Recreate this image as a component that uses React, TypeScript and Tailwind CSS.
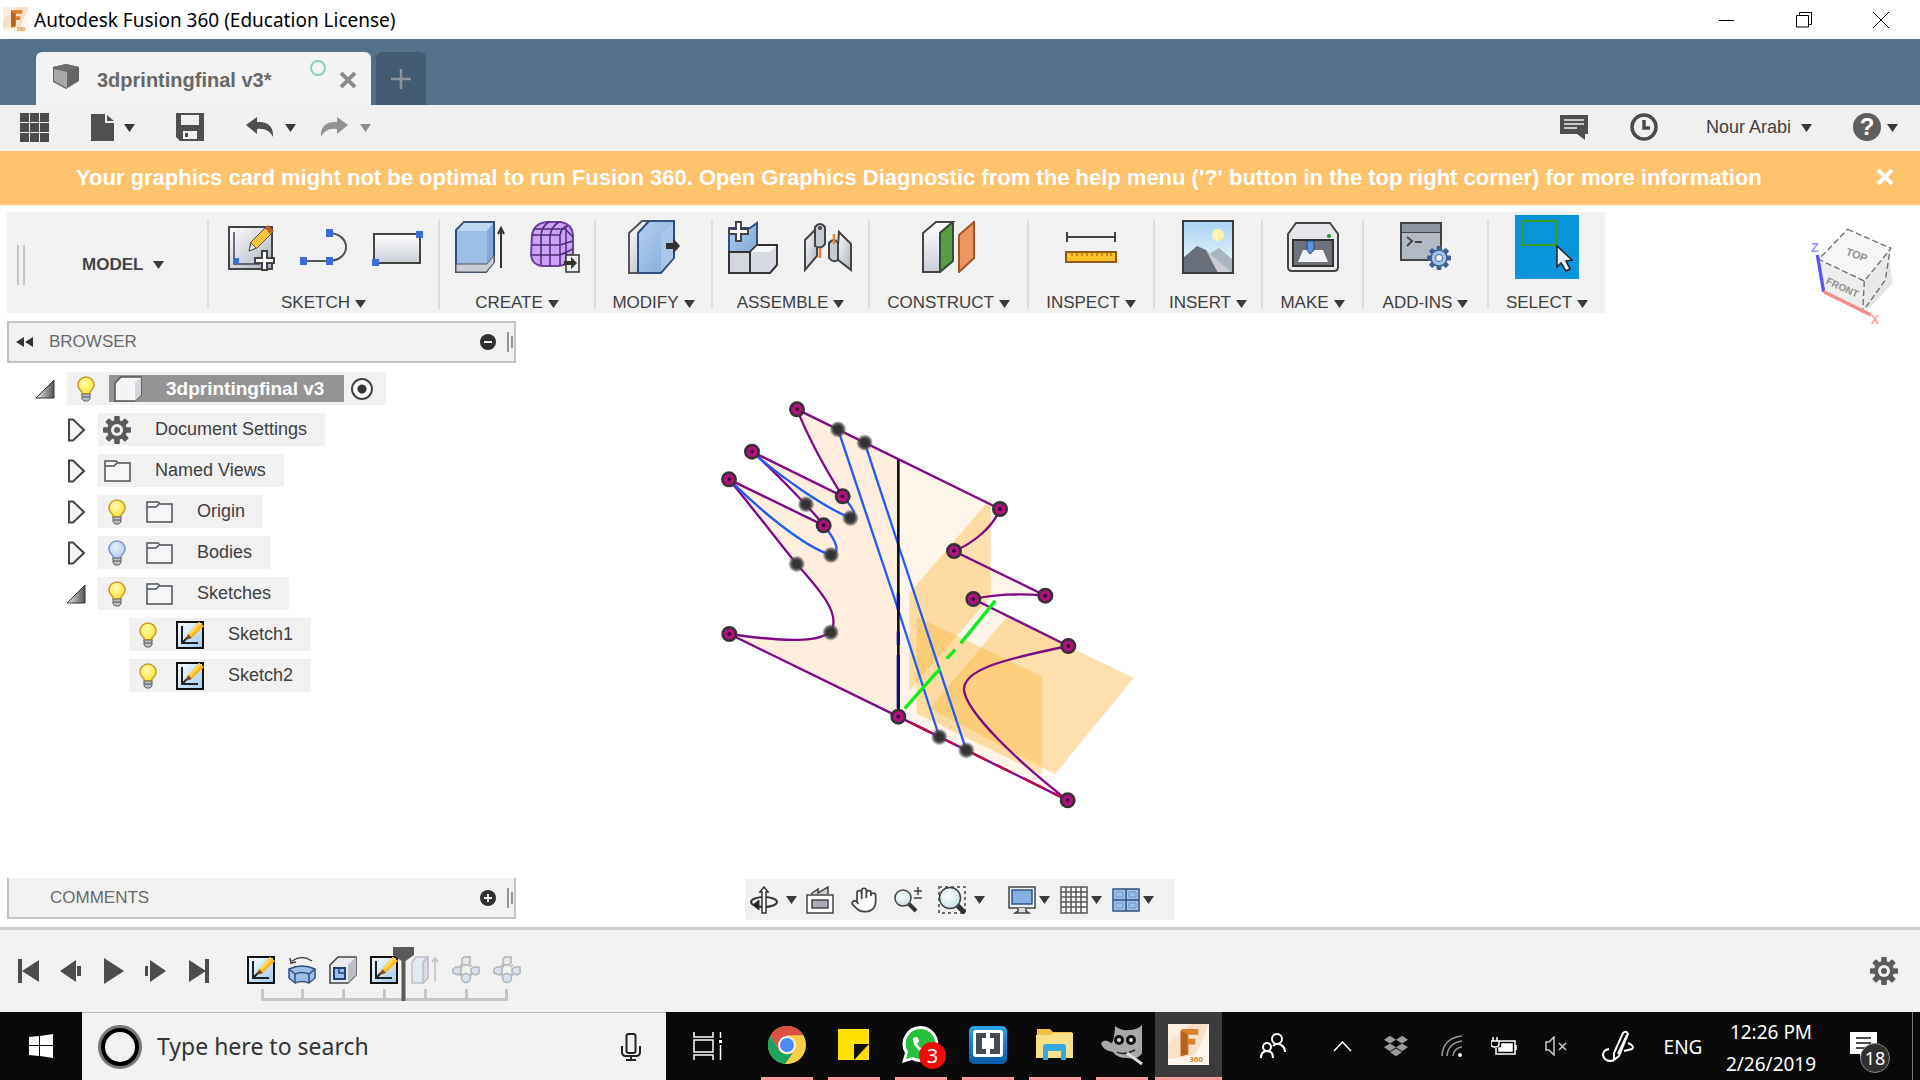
import { useState } from "react";
import type { ReactNode } from "react";
import { FaDropbox, FaPhoneAlt } from "react-icons/fa";
import { Hand } from "lucide-react";

type Row = {
  label: string;
  level: 1 | 2;
  open?: boolean;
  bulb?: "on" | "off";
  icon: "gear" | "folder" | "sketch";
};

const rows: Row[] = [
  { label: "Document Settings", level: 1, icon: "gear" },
  { label: "Named Views", level: 1, icon: "folder" },
  { label: "Origin", level: 1, bulb: "on", icon: "folder" },
  { label: "Bodies", level: 1, bulb: "off", icon: "folder" },
  { label: "Sketches", level: 1, open: true, bulb: "on", icon: "folder" },
  { label: "Sketch1", level: 2, bulb: "on", icon: "sketch" },
  { label: "Sketch2", level: 2, bulb: "on", icon: "sketch" },
];

const purplePoints = [
  [291, 88], [156, 215], [87, 298], [428, 349], [371, 436], [88, 762], [595, 1010],
  [900, 387], [762, 513], [1036, 647], [820, 657], [1105, 798], [1103, 1261],
];

const darkPoints = [
  [414, 148], [494, 188], [318, 373], [451, 414], [290, 552], [393, 525], [392, 757], [718, 1071], [799, 1111],
];

export default function App() {
  const [showWarning, setShowWarning] = useState(true);

  return (
    <div className="flex min-h-screen flex-col bg-white font-['Liberation_Sans',Arial,sans-serif] text-[#3f3f3f]">
      <Gradients />
      <TitleBar />
      <TabBar />
      <QuickAccess />
      {showWarning && (
        <div className="flex h-[54px] items-center bg-[#ffc26d] pb-[2px] pl-[76px] pr-[26px] text-white">
          <p className="flex-1 whitespace-nowrap text-[22px] font-bold">
            Your graphics card might not be optimal to run Fusion 360. Open Graphics Diagnostic from the help menu ('?'
            button in the top right corner) for more information
          </p>
          <button type="button" aria-label="Dismiss" onClick={() => setShowWarning(false)}>
            <svg className="size-[18px]" viewBox="0 0 18 18" stroke="#fff" strokeWidth="4">
              <path d="M2 2L16 16M16 2L2 16" />
            </svg>
          </button>
        </div>
      )}
      <main className="flex flex-1 flex-col pt-[7px]">
        <div className="flex justify-between pl-[7px] pr-[17px]">
          <Ribbon />
          <ViewCube />
        </div>
        <div className="mt-2 flex flex-1 justify-between px-[7px]">
          <aside className="flex w-[509px] flex-col justify-between pb-2">
            <Browser />
            <div className="flex h-[41px] items-center border-x-2 border-b-2 border-[#c4c4c4] bg-[#f1f1f1] pl-[41px]">
              <h2 className="flex-1 text-[17px] text-[#6b6b6b]">COMMENTS</h2>
              <RoundButton label="Expand comments" path="M4 8H12M8 4V12" />
              <PanelGrip />
            </div>
          </aside>
          <section className="flex flex-1 flex-col items-center justify-between pb-[7px] pt-[59px]">
            <SketchCanvas />
            <NavBar />
          </section>
          <div className="w-[509px]" />
        </div>
      </main>
      <Timeline />
      <Taskbar />
    </div>
  );
}

function Gradients() {
  return (
    <svg className="absolute size-0" aria-hidden="true">
      <defs>
        <linearGradient id="steel" x1="0" y1="0" x2="1" y2="1">
          <stop offset="0" stopColor="#ffffff" />
          <stop offset="1" stopColor="#aab1bd" />
        </linearGradient>
        <linearGradient id="blue" x1="0" y1="0" x2="1" y2="1">
          <stop offset="0" stopColor="#b4d0ee" />
          <stop offset="1" stopColor="#7fa9d8" />
        </linearGradient>
        <linearGradient id="page" x1="0" y1="0" x2="0" y2="1">
          <stop offset="0" stopColor="#ffffff" />
          <stop offset="1" stopColor="#c9ced8" />
        </linearGradient>
        <linearGradient id="sky" x1="0" y1="0" x2="0" y2="1">
          <stop offset="0" stopColor="#a9d4f2" />
          <stop offset="1" stopColor="#f3f8fb" />
        </linearGradient>
        <linearGradient id="sheet" x1="0" y1="0" x2="1" y2="1">
          <stop offset="0" stopColor="#ffffff" />
          <stop offset="1" stopColor="#9fc9ee" />
        </linearGradient>
        <linearGradient id="wedge" x1="0" y1="0" x2="1" y2="0">
          <stop offset="0" stopColor="#eeeeee" />
          <stop offset="1" stopColor="#555555" />
        </linearGradient>
        <linearGradient id="brackets" x1="0" y1="0" x2="0" y2="1">
          <stop offset="0" stopColor="#2ba5e6" />
          <stop offset="1" stopColor="#0b5aa8" />
        </linearGradient>
        <radialGradient id="bulbOn" cx="0.4" cy="0.35" r="0.7">
          <stop offset="0" stopColor="#fffcb0" />
          <stop offset="1" stopColor="#ffe22e" />
        </radialGradient>
        <radialGradient id="bulbOff" cx="0.4" cy="0.35" r="0.7">
          <stop offset="0" stopColor="#e6f0fe" />
          <stop offset="1" stopColor="#b4cdf5" />
        </radialGradient>
        <radialGradient id="lens" cx="0.4" cy="0.35" r="0.8">
          <stop offset="0" stopColor="#ffffff" />
          <stop offset="1" stopColor="#b9dbe0" />
        </radialGradient>
        <radialGradient id="point">
          <stop offset="0.45" stopColor="#333333" />
          <stop offset="0.7" stopColor="#444444" stopOpacity="0.8" />
          <stop offset="1" stopColor="#777777" stopOpacity="0" />
        </radialGradient>
      </defs>
    </svg>
  );
}

function Caret({ muted }: { muted?: boolean }) {
  return (
    <svg className="h-[9px] w-[11px] shrink-0" viewBox="0 0 11 9" fill={muted ? "#8d8d8d" : "#3a3a3a"}>
      <path d="M0 1H11L5.500 9Z" />
    </svg>
  );
}

function TitleBar() {
  return (
    <header className="flex h-[39px] items-center bg-white pl-[3px] font-['Noto_Sans',sans-serif] text-black">
      <FusionLogo className="size-[26px]" />
      <h1 className="ml-[5px] flex-1 pt-[2px] text-[19px]">Autodesk Fusion 360 (Education License)</h1>
      <div className="flex">
        <button type="button" aria-label="Minimize" className="flex h-[38px] w-[76px] items-center justify-center">
          <svg className="size-4" viewBox="0 0 16 16" stroke="#000"><path d="M0 8.500H15" /></svg>
        </button>
        <button type="button" aria-label="Restore" className="flex h-[38px] w-[77px] items-center justify-center">
          <svg className="size-4" viewBox="0 0 16 16" fill="none" stroke="#000">
            <path d="M.5 3.500H12.500V15H.5ZM3.500 3.500V.5H15.500V12.500H12.500" />
          </svg>
        </button>
        <button type="button" aria-label="Close" className="flex h-[38px] w-[78px] items-center justify-center">
          <svg className="size-4" viewBox="0 0 16 16" stroke="#000"><path d="M0 0L16 16M16 0L0 16" /></svg>
        </button>
      </div>
    </header>
  );
}

function TabBar() {
  return (
    <nav className="flex h-[66px] items-end gap-[5px] bg-[#53718a] pl-9">
      <div className="flex h-[53px] w-[335px] items-center rounded-t-md bg-[#f3f3f3] pl-4 pr-[13px] pt-[2px]">
        <svg className="mb-[6px] h-[27px] w-[28px]" viewBox="0 0 28 27">
          <path d="M1 4L14 1L27 4V18L14 26L1 19Z" fill="#666" />
          <path d="M2 6L15 9V25L2 18Z" fill="#a9a9a9" />
          <path d="M1 4L14 1L27 4L14 8Z" fill="#6f6f6f" />
        </svg>
        <span className="ml-[17px] flex-1 text-[20px] font-bold text-[#686868]">3dprintingfinal v3*</span>
        <span className="mb-6 mr-3 size-4 rounded-full border-2 border-[#86cfc2]" />
        <button type="button" aria-label="Close tab" className="p-[2px]">
          <svg className="size-4" viewBox="0 0 16 16" stroke="#8b8b8b" strokeWidth="4">
            <path d="M1 1L15 15M15 1L1 15" />
          </svg>
        </button>
      </div>
      <button
        type="button"
        aria-label="New tab"
        className="flex h-[53px] w-[50px] items-center justify-center rounded-t-md bg-[#435b70]"
      >
        <svg className="size-5" viewBox="0 0 20 20" stroke="#8b949c" strokeWidth="2.500">
          <path d="M10 0V20M0 10H20" />
        </svg>
      </button>
    </nav>
  );
}

function QuickAccess() {
  return (
    <div className="flex h-[46px] items-center justify-between bg-[#f0f0f0] pb-[2px] pl-5 pr-[22px]">
      <div className="flex items-center">
        <button type="button" aria-label="Data panel">
          <svg className="size-[29px]" viewBox="0 0 29 29" fill="#4b4b4b">
            {[0, 10, 20].map((y) => [0, 10, 20].map((x) => <rect key={`${x}-${y}`} x={x} y={y} width="9" height="9" />))}
          </svg>
        </button>
        <button type="button" aria-label="File" className="ml-[42px] flex items-center gap-[10px]">
          <svg className="h-[27px] w-[23px]" viewBox="0 0 23 27" fill="#505050">
            <path d="M0 0H14V9H23V27H0ZM16 1L23 7H16Z" />
          </svg>
          <Caret />
        </button>
        <button type="button" aria-label="Save" className="ml-[41px]">
          <svg className="size-7" viewBox="0 0 28 28">
            <path d="M0 0H28V28H4L0 24Z" fill="#4f4f4f" />
            <path d="M5 2H23V12H5Z" fill="#f0f0f0" />
            <path d="M7 18H21V26H7Z" fill="#f0f0f0" />
            <path d="M9 20H12V24H9Z" fill="#4f4f4f" />
          </svg>
        </button>
        <button type="button" aria-label="Undo" className="ml-[42px] flex items-center gap-[11px]">
          <svg className="h-[20px] w-[28px]" viewBox="0 0 28 20" fill="#505050">
            <path d="M0 8L11 0V5C22 4 28 10 27 20C24 14 19 11 11 12V17Z" />
          </svg>
          <Caret />
        </button>
        <button type="button" aria-label="Redo" className="ml-[24px] flex items-center gap-[12px]">
          <svg className="h-[20px] w-[28px]" viewBox="0 0 28 20" fill="#939393">
            <path d="M28 8L17 0V5C6 4 0 10 1 20C4 14 9 11 17 12V17Z" />
          </svg>
          <Caret muted />
        </button>
      </div>
      <div className="flex items-center">
        <button type="button" aria-label="Notifications">
          <svg className="h-[25px] w-[28px]" viewBox="0 0 28 25">
            <path d="M0 0H28V19H25V25L17 19H0Z" fill="#4f4f4f" />
            <path d="M4 5H24M4 9H24M4 13H17" stroke="#f0f0f0" strokeWidth="1.500" />
          </svg>
        </button>
        <button type="button" aria-label="Job status" className="ml-[42px]">
          <svg className="size-7" viewBox="0 0 28 28" fill="none" stroke="#4c4c4c">
            <circle cx="14" cy="14" r="12" strokeWidth="3.500" />
            <path d="M14 7V15H20" strokeWidth="3.500" />
          </svg>
        </button>
        <button type="button" className="ml-[48px] flex items-center gap-[10px] text-[18px]">
          Nour Arabi
          <Caret />
        </button>
        <button type="button" aria-label="Help" className="ml-[41px] flex items-center gap-[6px]">
          <span className="flex size-7 items-center justify-center rounded-full bg-[#5f5f5f] text-[24px] font-bold leading-none text-white">
            ?
          </span>
          <Caret />
        </button>
      </div>
    </div>
  );
}

function Group({ label, width, children }: { label: string; width: string; children: ReactNode }) {
  return (
    <div className={`flex ${width} flex-col items-center border-l-2 border-[#dcdcdc]`}>
      <div className="-mt-[5px] flex h-[64px] shrink-0 items-center gap-[25px]">{children}</div>
      <button type="button" className="mt-[14px] flex shrink-0 items-center gap-[5px] text-[17px] leading-5">
        {label}
        <Caret />
      </button>
    </div>
  );
}

function Ribbon() {
  return (
    <div className="flex h-[101px] bg-[#f1f1f1] pb-1 pt-2">
      <div className="flex w-[200px] items-center pl-[10px]">
        <span className="h-10 w-[8px] border-x-2 border-[#c6c6c6]" />
        <button type="button" className="ml-[57px] flex items-center gap-[10px] text-[17px] font-bold text-[#444]">
          MODEL
          <Caret />
        </button>
      </div>
      <Group label="SKETCH" width="w-[231px]">
        <svg className="size-12" viewBox="0 0 48 48">
          <rect x="2" y="4" width="43" height="42" fill="url(#steel)" stroke="#444" strokeWidth="2" />
          <path d="M7 9V41H33" fill="none" stroke="#445" strokeWidth="1.500" />
          <rect x="6" y="35" width="6" height="6" fill="#3c73d8" />
          <path d="M22 28L24 19L40 3L46 9L30 25Z" fill="#fbc53a" stroke="#555" />
          <path d="M22 28L24 20L29 25Z" fill="#f7e8d4" stroke="#555" />
          <path d="M38 5L41 2L47 8L43 11Z" fill="#b4663a" />
          <Plus x={28} y={28} />
        </svg>
        <svg className="size-12" viewBox="0 0 48 48" fill="none">
          <path d="M2 38H28C52 38 52 10 28 10" stroke="#555" strokeWidth="2" />
          <path d="M0 34H7V42H0ZM26 34H33V42H26ZM26 6H33V14H26Z" fill="#3c6fd6" />
        </svg>
        <svg className="size-12 overflow-visible" viewBox="0 0 48 48">
          <rect x="1" y="11" width="46" height="29" fill="url(#page)" stroke="#444" strokeWidth="2" />
          <path d="M-1 36H6V43H-1ZM43 8H50V15H43Z" fill="#3c6fd6" />
        </svg>
      </Group>
      <Group label="CREATE" width="w-[156px]">
        <svg className="h-[52px] w-[50px]" viewBox="0 0 50 52">
          <path d="M1 9L9 1H39V41L31 51H1Z" fill="#9dbfe6" stroke="#36507c" strokeWidth="2" />
          <path d="M1 43H32L39 34V42L31 51H1Z" fill="#c8cdd6" stroke="#555" />
          <path d="M2 10L9 2H38L31 10Z" fill="#bfd9f2" />
          <path d="M32 10L38 3V34L32 42Z" fill="#7fabdc" />
          <path d="M46 47V8M43 13L46 7L49 13" stroke="#333" strokeWidth="2" fill="none" />
        </svg>
        <svg className="h-[52px] w-[50px]" viewBox="0 0 50 52">
          <path d="M2 14Q4 2 17 1H31Q42 3 43 14V32Q42 43 29 45H12Q2 44 1 34Z" fill="#cda0fa" stroke="#6d3fa0" strokeWidth="2" />
          <path d="M2 14H30V45M11 14V44M20 14V45M2 24H30M2 34H30M11 14Q12 5 19 1M20 14Q22 5 29 1M30 14Q32 5 38 5M4 8H35L43 16M30 24L43 20M30 34L43 28M36 6V42" fill="none" stroke="#4b2b73" strokeWidth="1.500" />
          <path d="M36 34H49V51H36Z" fill="#eee" stroke="#333" strokeWidth="1.500" />
          <path d="M34 40H41V36L47 42L41 48V44H34Z" fill="#333" />
        </svg>
      </Group>
      <Group label="MODIFY" width="w-[117px]">
        <svg className="h-[54px] w-[52px]" viewBox="0 0 52 54">
          <path d="M1 13L14 1H26V53H1Z" fill="url(#steel)" stroke="#555" strokeWidth="2" />
          <path d="M10 13L21 1H46V38L33 53H10Z" fill="url(#blue)" stroke="#2f4f83" strokeWidth="2" />
          <path d="M33 14L45 3V38L33 51Z" fill="#a9c6e8" />
          <path d="M38 23H45V18L52 26L45 34V29H38Z" fill="#333" />
        </svg>
      </Group>
      <Group label="ASSEMBLE" width="w-[157px]">
        <svg className="h-[53px] w-[50px]" viewBox="0 0 50 53">
          <path d="M1 7H22L29 2V25L22 31H1Z" fill="url(#blue)" stroke="#2f4f83" strokeWidth="2" />
          <path d="M1 31H22V52H1Z" fill="#d3d7de" stroke="#333" strokeWidth="2" />
          <path d="M22 31L29 24H49V44L42 52H22Z" fill="#d8dce2" stroke="#333" strokeWidth="2" />
          <path d="M23 31L29 25H48L42 31Z" fill="#f4f6f8" />
          <Plus x={1} y={1} />
        </svg>
        <svg className="h-[50px] w-[50px]" viewBox="0 0 50 50">
          <path d="M2 18L14 6V34L2 48Z" fill="url(#steel)" stroke="#444" strokeWidth="2" />
          <path d="M12 5Q17 -1 22 5V22Q18 28 12 24Z" fill="#c5cad2" stroke="#444" strokeWidth="2" />
          <circle cx="17" cy="6" r="2" fill="#444" />
          <path d="M36 10L48 22V48L34 37Z" fill="url(#steel)" stroke="#444" strokeWidth="2" />
          <path d="M26 21Q31 15 35 21V38Q30 41 26 36Z" fill="#c5cad2" stroke="#444" strokeWidth="2" />
          <path d="M17 26V36M31 12V22" stroke="#f08030" strokeWidth="2.500" />
        </svg>
      </Group>
      <Group label="CONSTRUCT" width="w-[159px]">
        <svg className="h-[52px] w-[54px]" viewBox="0 0 54 52">
          <path d="M1 12L14 1H31L18 12V51H1Z" fill="url(#page)" stroke="#444" strokeWidth="2" />
          <path d="M18 12L31 1V40L18 51Z" fill="#5a9c46" stroke="#3a4a34" strokeWidth="2" />
          <path d="M37 14L52 1V37L37 51Z" fill="#ee9660" stroke="#a2552c" strokeWidth="2" />
        </svg>
      </Group>
      <Group label="INSPECT" width="w-[126px]">
        <svg className="h-[48px] w-[52px]" viewBox="0 0 52 48">
          <path d="M2 14H50M2 9V19M50 9V19" stroke="#444" strokeWidth="2" />
          <rect x="1" y="29" width="50" height="10" fill="#fcc22c" stroke="#8f5a12" strokeWidth="2" />
          <path d="M7 29V33M12 29V33M17 29V33M22 29V33M27 29V33M32 29V33M37 29V33M42 29V33M46 29V33" stroke="#8f5a12" />
        </svg>
      </Group>
      <Group label="INSERT" width="w-[108px]">
        <svg className="h-[54px] w-[52px]" viewBox="0 0 52 54">
          <rect x="1" y="1" width="50" height="52" fill="url(#sky)" />
          <circle cx="36" cy="15" r="6" fill="#fff4b0" />
          <path d="M24 36L37 28L51 40V53H24Z" fill="#a8b4be" />
          <path d="M1 38L15 26L24 30L44 53H1Z" fill="#69707c" />
          <path d="M24 30L50 53H36Z" fill="#c9ccd2" />
          <rect x="1" y="1" width="50" height="52" fill="none" stroke="#3a3a3a" strokeWidth="2" />
        </svg>
      </Group>
      <Group label="MAKE" width="w-[101px]">
        <svg className="h-[50px] w-[52px]" viewBox="0 0 52 50">
          <path d="M1 12L9 1H43L51 12V45Q51 49 47 49H5Q1 49 1 45Z" fill="#e6e7ea" stroke="#444" strokeWidth="2" />
          <path d="M6 18H46V44H6Z" fill="#6f7278" stroke="#333" strokeWidth="2" />
          <path d="M16 28H36L41 40H11Z" fill="#f2f4f6" />
          <path d="M20 19H27V28L23 32L20 28Z" fill="#5b94dc" stroke="#234a86" />
          <circle cx="42" cy="14" r="2" fill="#1e9a2c" />
        </svg>
      </Group>
      <Group label="ADD-INS" width="w-[125px]">
        <svg className="h-[50px] w-[52px]" viewBox="0 0 52 50">
          <rect x="1" y="1" width="40" height="37" fill="#b4b9c6" stroke="#444" strokeWidth="2" />
          <rect x="2" y="2" width="38" height="8" fill="#8f95a1" />
          <path d="M1 10.500H41" stroke="#444" />
          <path d="M7 15L12 19L7 24M15 20H22" fill="none" stroke="#444" strokeWidth="2" />
          <g transform="translate(27 24)">
            <Teeth size={24} color="#3d5f91" />
            <circle cx="12" cy="12" r="8" fill="#a4c1e8" stroke="#3d5f91" strokeWidth="1.500" />
            <circle cx="12" cy="12" r="3.500" fill="#fff" stroke="#3d5f91" />
          </g>
        </svg>
      </Group>
      <Group label="SELECT" width="w-[118px]">
        <svg className="size-16 bg-[#0a94da]" viewBox="0 0 64 64">
          <rect x="7" y="6" width="35" height="24" fill="none" stroke="#3d9a20" strokeWidth="2" />
          <path d="M42 31V52L46 48L51 56L55 54L51 46L57 45Z" fill="#eef0f3" stroke="#222" strokeWidth="1.500" />
        </svg>
      </Group>
    </div>
  );
}

function Plus({ x, y }: { x: number; y: number }) {
  return (
    <path
      transform={`translate(${x} ${y})`}
      d="M7 0H12V7H19V12H12V19H7V12H0V7H7Z"
      fill="#fff"
      stroke="#444"
      strokeWidth="2"
    />
  );
}

function ViewCube() {
  return (
    <svg className="h-[101px] w-[97px] overflow-visible" viewBox="980 636 291 303">
      <path d="M1160 935L1240 850L1225 740Z" fill="#d9d9d9" opacity=".7" />
      <path d="M1105 688L1235 745L1155 843L1018 778Z" fill="#f6f6f6" />
      <path d="M1018 778L1155 843L1150 935L1033 875Z" fill="#ededed" />
      <path d="M1155 843L1235 745L1218 840L1150 935Z" fill="#e9e9e9" />
      <path
        d="M1105 688L1235 745L1155 843L1018 778ZM1155 843L1150 935L1218 840L1232 750"
        fill="none"
        stroke="#6f6f6f"
        strokeWidth="4"
        strokeDasharray="18 9"
      />
      <path d="M1033 875L1150 935" stroke="#8a8a8a" strokeWidth="3" />
      <path d="M1014 765L1033 875" stroke="#5a52f5" strokeWidth="10" />
      <path d="M1033 875L1175 945" stroke="#f48a8a" strokeWidth="10" />
      <text x="1098" y="764" fontSize="32" fontWeight="bold" fill="#8f8f8f" transform="rotate(20 1098 764)">TOP</text>
      <text x="1038" y="850" fontSize="30" fontWeight="bold" fill="#8f8f8f" transform="rotate(25 1038 850)">FRONT</text>
      <text x="995" y="756" fontSize="38" fontWeight="bold" fill="#9a94fb">Z</text>
      <text x="1174" y="972" fontSize="38" fontWeight="bold" fill="#f8a0a0">X</text>
    </svg>
  );
}

function RoundButton({ label, path }: { label: string; path: string }) {
  return (
    <button type="button" aria-label={label}>
      <svg className="size-4" viewBox="0 0 16 16">
        <circle cx="8" cy="8" r="8" fill="#303030" />
        <path d={path} stroke="#f1f1f1" strokeWidth="2" />
      </svg>
    </button>
  );
}

function PanelGrip() {
  return (
    <svg className="ml-[11px] mr-[1px] h-5 w-[6px]" viewBox="0 0 6 20" stroke="#777" strokeWidth="1.500">
      <path d="M1 0V20M5 4V16" />
    </svg>
  );
}

function Browser() {
  return (
    <div>
      <div className="flex h-[42px] items-center border-2 border-[#c4c4c4] bg-[#f1f1f1] pl-[7px]">
        <button type="button" aria-label="Collapse browser">
          <svg className="h-[10px] w-[17px]" viewBox="0 0 17 10" fill="#333">
            <path d="M8 0V10L0 5ZM17 0V10L9 5Z" />
          </svg>
        </button>
        <h2 className="ml-4 flex-1 text-[17px] text-[#6b6b6b]">BROWSER</h2>
        <RoundButton label="Collapse all" path="M4 8H12" />
        <PanelGrip />
      </div>
      <ul className="mt-[9px] flex flex-col gap-2 text-[18px]">
        <li className="flex items-center gap-3 pl-[28px]">
          <Toggle open />
          <div className="flex h-[33px] items-center bg-[#f1f1f1] pl-[5px] pr-[13px]">
            <Bulb kind="on" />
            <div className="ml-[9px] mr-[7px] flex h-[27px] items-center bg-[#949494] pl-[5px] pr-5 pt-[2px] text-[19px] font-bold text-white">
              <svg className="mb-[2px] mr-6 h-[26px] w-7" viewBox="0 0 28 26">
                <path d="M1 7L7 1H27V19L21 25H1Z" fill="#f4f5f7" stroke="#555" strokeWidth="1.500" />
                <path d="M21 7L27 1V19L21 25Z" fill="#d3d6db" />
              </svg>
              3dprintingfinal v3
            </div>
            <input
              type="radio"
              aria-label="Activate component"
              defaultChecked
              className="size-[22px] appearance-none rounded-full border-2 border-[#444] bg-[radial-gradient(circle,#333_0_4px,#fff_5px)]"
            />
          </div>
        </li>
        {rows.map((row) => (
          <li key={row.label} className={row.level === 1 ? "flex items-center gap-3 pl-[59px]" : "flex pl-[122px]"}>
            {row.level === 1 && <Toggle open={row.open} />}
            <div className="flex h-[33px] items-center bg-[#f1f1f1] pl-[5px] pr-[18px]">
              {row.bulb && (
                <span className="mr-[14px]">
                  <Bulb kind={row.bulb} />
                </span>
              )}
              <span className="mr-6 flex w-7 justify-center">
                {row.icon === "gear" && <Gear />}
                {row.icon === "folder" && <Folder />}
                {row.icon === "sketch" && <SketchIcon />}
              </span>
              {row.label}
            </div>
          </li>
        ))}
      </ul>
    </div>
  );
}

function Toggle({ open }: { open?: boolean }) {
  return (
    <button type="button" aria-label={open ? "Collapse" : "Expand"}>
      <svg className="h-[24px] w-5" viewBox="0 0 20 24">
        {open ? (
          <path d="M19 3V21H1Z" fill="url(#wedge)" stroke="#333" />
        ) : (
          <path d="M3 1.500H7L18 12L7 22.500H3Z" fill="#f4f4f4" stroke="#444" strokeWidth="2" />
        )}
      </svg>
    </button>
  );
}

function Bulb({ kind }: { kind: "on" | "off" }) {
  return (
    <svg className="h-[26px] w-7" viewBox="0 0 28 26">
      <path
        d="M14 1A8 8 0 0 1 22 9Q22 12 18 16V18H10V16Q6 12 6 9A8 8 0 0 1 14 1Z"
        fill={kind === "on" ? "url(#bulbOn)" : "url(#bulbOff)"}
        stroke={kind === "on" ? "#c79a2a" : "#7c97cc"}
        strokeWidth="1.500"
      />
      <path d="M10 18H18V23L16 25H12L10 23Z" fill="#b8bcc4" stroke="#666" />
      <path d="M10 21H18" stroke="#555" />
    </svg>
  );
}

function Folder() {
  return (
    <svg className="h-6 w-[27px]" viewBox="0 0 27 24">
      <path d="M1 22V2H12L14 4H26V22Z" fill="#f5f6f8" stroke="#4c5158" strokeWidth="1.500" />
      <path d="M1 7H10L13 4" fill="none" stroke="#4c5158" strokeWidth="1.500" />
    </svg>
  );
}

function SketchIcon() {
  return (
    <svg className="size-7" viewBox="0 0 28 28">
      <rect x="1" y="1" width="26" height="26" fill="url(#sheet)" stroke="#111" strokeWidth="2" />
      <path d="M6 5V22H22M6 22L12 16" fill="none" stroke="#222" strokeWidth="2" />
      <path d="M10 19L13 12L23 1L28 5L17 16Z" fill="#fdb827" />
      <path d="M10 19L12 13L16 17Z" fill="#8a4a1c" />
      <path d="M13 12L23 1L25 3L15 14Z" fill="#ffd94f" />
    </svg>
  );
}

function Teeth({ size, color }: { size: number; color: string }) {
  const mid = size / 2;
  return (
    <g fill={color}>
      {[0, 45, 90, 135].map((angle) => (
        <rect
          key={angle}
          x={mid - size / 10}
          y="0"
          width={size / 5}
          height={size}
          rx="1"
          transform={`rotate(${angle} ${mid} ${mid})`}
        />
      ))}
    </g>
  );
}

function Gear() {
  return (
    <svg className="size-7" viewBox="0 0 28 28">
      <Teeth size={28} color="#5b5b5b" />
      <circle cx="14" cy="14" r="10" fill="#5b5b5b" />
      <circle cx="14" cy="14" r="6" fill="#f1f1f1" />
      <circle cx="14" cy="14" r="3" fill="#5b5b5b" />
    </svg>
  );
}

function SketchCanvas() {
  return (
    <svg className="h-[440px] w-[520px]" viewBox="0 0 1560 1320" fill="none">
      <path
        d="M291 88L595 240V1010L88 762C250 785 365 790 395 750C420 700 360 630 290 552C240 490 150 375 87 298L371 436C340 395 220 270 156 215L428 349Q340 210 291 88Z"
        fill="#ffeedd"
      />
      <path
        d="M595 240L900 387C880 440 820 490 762 513L1036 647Q920 636 820 657L1105 798C900 840 790 870 792 930C800 1000 960 1150 1103 1261L595 1010Z"
        fill="#fff5ea"
      />
      {/* origin planes */}
      <g fill="#fdb83f" fillOpacity=".42">
        <path d="M628 640L872 355V650L628 932Z" />
        <path d="M650 710L1027 890V1185L650 1000Z" />
        <path d="M920 712L1302 893L1065 1183L690 985Z" />
      </g>
      <g stroke="#7f0a86" strokeWidth="7">
        <path d="M291 88L900 387C880 440 820 490 762 513L1036 647Q920 636 820 657L1105 798C900 840 790 870 792 930C800 1000 960 1150 1103 1261L595 1010L88 762C250 785 365 790 395 750C420 700 360 630 290 552C240 490 150 375 87 298L371 436C340 395 220 270 156 215L428 349Q340 210 291 88" />
      </g>
      <path d="M630 1027L1090 1254" stroke="#c0064a" strokeWidth="7" strokeDasharray="70 30 50 40" />
      <g stroke="#1f5ef5" strokeWidth="7">
        <path d="M414 148L595 690L718 1071" />
        <path d="M494 188L600 510L799 1111" />
        <path d="M156 215C240 290 370 380 451 414C475 410 460 385 428 349" />
        <path d="M87 298C180 390 310 500 393 525C420 520 415 490 371 436" />
      </g>
      <path d="M595 240V1010" stroke="#111" strokeWidth="8" />
      <path d="M595 640V690M595 755V795M595 825V985" stroke="#10107a" strokeWidth="10" />
      <path d="M614 986L720 866M740 836L766 809M782 790L886 662" stroke="#0bf01a" strokeWidth="10" />
      {darkPoints.map(([x, y]) => (
        <circle key={`${x}-${y}`} cx={x} cy={y} r="26" fill="url(#point)" />
      ))}
      {purplePoints.map(([x, y]) => (
        <g key={`${x}-${y}`}>
          <circle cx={x} cy={y} r="20" fill="#b3117f" stroke="#3a3038" strokeWidth="8" />
          <circle cx={x} cy={y} r="6" fill="#3c0630" />
        </g>
      ))}
    </svg>
  );
}

function NavBar() {
  return (
    <div className="flex h-[41px] w-[430px] items-center bg-[#f1f1f1] pl-[5px]">
      <button type="button" aria-label="Orbit" className="flex items-center gap-[8px]">
        <svg className="size-7" viewBox="0 0 28 28" fill="none" stroke="#333">
          <ellipse cx="14" cy="16" rx="13" ry="5" strokeWidth="2" />
          <path d="M12 27V6H10L14 1L18 6H16V27Z" fill="#fff" strokeWidth="1.500" />
          <path d="M3 19L9 14V24Z" fill="#222" />
        </svg>
        <Caret />
      </button>
      <button type="button" aria-label="Look at" className="ml-[9px]">
        <svg className="size-7" viewBox="0 0 28 28" stroke="#444" strokeWidth="1.500">
          <path d="M5 8L12 3L12 7L22 1V8" fill="#ccd0d6" />
          <rect x="1" y="9" width="26" height="18" fill="#fff" />
          <rect x="6" y="14" width="16" height="8" fill="#a4abb6" />
        </svg>
      </button>
      <button type="button" aria-label="Pan" className="ml-4">
        <Hand className="size-7" fill="#fff" color="#444" strokeWidth={1.5} />
      </button>
      <button type="button" aria-label="Zoom" className="ml-4">
        <svg className="size-7" viewBox="0 0 28 28" stroke="#444">
          <path d="M15 18L22 25" stroke="#333" strokeWidth="4" />
          <circle cx="9" cy="12" r="8" fill="url(#lens)" strokeWidth="1.500" />
          <path d="M20 5H28M24 1V9M20 12H28" strokeWidth="1.500" />
        </svg>
      </button>
      <button type="button" aria-label="Zoom window" className="ml-4 flex items-center gap-[8px]">
        <svg className="size-7" viewBox="0 0 28 28" stroke="#444">
          <rect x="1" y="1" width="26" height="26" fill="none" strokeWidth="1.500" strokeDasharray="3 3" />
          <path d="M19 19L27 27" stroke="#333" strokeWidth="5" />
          <circle cx="12" cy="12" r="10.500" fill="url(#lens)" strokeWidth="1.500" />
        </svg>
        <Caret />
      </button>
      <button type="button" aria-label="Display settings" className="ml-[23px] flex items-center gap-[3px]">
        <svg className="size-7" viewBox="0 0 28 28" stroke="#444" strokeWidth="1.500">
          <rect x="1" y="1" width="26" height="21" fill="#f1f1f1" />
          <rect x="4" y="4" width="20" height="14" fill="#86b0e4" stroke="#2f5590" />
          <path d="M10 22V25L7 27H21L18 25V22" fill="#ddd" />
        </svg>
        <Caret />
      </button>
      <button type="button" aria-label="Grid and snaps" className="ml-[10px] flex items-center gap-[3px]">
        <svg className="size-7" viewBox="0 0 28 28" fill="#fff" stroke="#555" strokeWidth="1.500">
          <path d="M1 1H27V27H1ZM1 6H27M1 11H27M1 16H27M1 21H27M6 1V27M11 1V27M16 1V27M21 1V27" />
        </svg>
        <Caret />
      </button>
      <button type="button" aria-label="Viewports" className="ml-[10px] flex items-center gap-[3px]">
        <svg className="size-7" viewBox="0 0 28 28" fill="#9cc0ea" stroke="#32507c" strokeWidth="1.500">
          <path d="M1 3H14V14H1ZM14 3H27V14H14ZM1 14H14V25H1ZM14 14H27V25H14Z" />
          <path d="M4 6H11V11H4ZM17 6H24V11H17ZM4 17H11V22H4ZM17 17H24V22H17Z" stroke="#6e97cc" strokeWidth="1" />
        </svg>
        <Caret />
      </button>
    </div>
  );
}

function Timeline() {
  return (
    <footer className="flex h-[85px] items-center justify-between border-t-[3px] border-[#cccccc] bg-[#f1f1f1] pl-[17px] pr-[22px]">
      <div className="flex items-center">
        <div className="flex items-center gap-[14px]">
          {transport.map(({ label, path }) => (
            <button key={label} type="button" aria-label={label}>
              <svg className="size-7" viewBox="0 0 28 28" fill="#4c4c4c">
                <path d={path} />
              </svg>
            </button>
          ))}
        </div>
        <div className="relative ml-[34px] flex flex-col pt-[14px]">
          <div className="flex gap-[13px]">
            <SketchIcon />
            <svg className="size-7" viewBox="0 0 28 28" stroke="#444" strokeWidth="1.500">
              <path d="M24 5Q14 -2 4 5M2 2L3 7L8 6" fill="none" />
              <path d="M1 13Q14 7 27 13V22L21 27Q14 24 7 27L1 22Z" fill="#9cc0ea" stroke="#36507c" />
              <path d="M1 13L7 18V27M7 18Q14 15 21 18V27M21 18L27 13" fill="none" stroke="#36507c" />
            </svg>
            <svg className="size-7" viewBox="0 0 28 28" stroke="#444" strokeWidth="1.500">
              <path d="M1 9L9 1H27V19L19 27H1Z" fill="#e8ebef" />
              <path d="M19 9L27 1V19L19 27Z" fill="#b9bec7" stroke="none" />
              <rect x="5" y="12" width="11" height="11" fill="#9cc0ea" stroke="#1f3f74" strokeWidth="2" />
              <path d="M10 12V17H16" fill="none" stroke="#1f3f74" />
            </svg>
            <SketchIcon />
            <svg className="size-7 opacity-35" viewBox="0 0 28 28" stroke="#667" strokeWidth="1.500">
              <path d="M1 6L5 1H17V22L12 27H1Z" fill="#c5dbf2" />
              <path d="M12 6L17 1V22L12 27Z" fill="#a9bdd6" />
              <path d="M24 25V3M21 6L24 2L27 6" fill="none" />
            </svg>
            <PatternIcon />
            <PatternIcon />
          </div>
          <svg className="mt-[5px] h-3 w-[274px]" viewBox="0 0 274 12" fill="none" stroke="#c6c6c6" strokeWidth="3">
            <path d="M15.500 0V10.500H259.500V0M55.500 0V10M96.500 0V10M137.500 0V10M178.500 0V10M219.500 0V10" />
          </svg>
          <svg className="absolute left-[146px] top-[5px] h-[54px] w-[21px]" viewBox="0 0 21 54" fill="#5a5a5a">
            <path d="M0 0H21V8L12.500 14V54H8.500V14L0 8Z" />
          </svg>
        </div>
      </div>
      <button type="button" aria-label="Timeline settings">
        <Gear />
      </button>
    </footer>
  );
}

const transport = [
  { label: "Go to start", path: "M1 2H5V26H1ZM22 3V25L5 14Z" },
  { label: "Step back", path: "M17 3V25L1 14ZM18 9H22V19H18Z" },
  { label: "Play", path: "M3 1L23 14L3 27Z" },
  { label: "Step forward", path: "M7 3L23 14L7 25ZM2 9H5V19H2Z" },
  { label: "Go to end", path: "M4 3L21 14L4 25ZM20 2H24V26H20Z" },
];

function PatternIcon() {
  return (
    <svg className="size-7 opacity-40" viewBox="0 0 28 28" fill="#b4cdec" stroke="#556" strokeWidth="1.500">
      <path d="M10 3L12 1H18V7L16 9H10Z" fill="#ddd" />
      <path d="M1 13L4 11H9V17L6 19L1 17ZM19 13L22 11H27V17L24 19L19 17Z" />
      <circle cx="14" cy="22" r="4.500" />
      <path d="M8 9L11 11M20 9L17 11M8 20L10 18M20 20L18 18" />
    </svg>
  );
}

function FusionLogo({ className }: { className: string }) {
  return (
    <svg className={className} viewBox="0 0 42 42">
      <rect width="42" height="42" fill="#fff6ee" />
      <path d="M0 0H42L28 32L0 36Z" fill="#fbe0c8" />
      <path d="M0 0H24L0 20Z" fill="#fdeee0" />
      <path d="M14 5H31V11H21V15H28V21H21V31L13 33V7Z" fill="#d9822f" />
      <path d="M13 7L20 11V31L13 33Z" fill="#b5621d" />
      <text x="22" y="39" fontSize="8" fontWeight="bold" fill="#d9822f">360</text>
    </svg>
  );
}

function AppSlot({ label, active, children }: { label: string; active?: boolean; children: ReactNode }) {
  return (
    <button
      type="button"
      aria-label={label}
      className={`flex h-full w-[67px] flex-col items-center ${active ? "bg-[#3b3b3b]" : ""}`}
    >
      <span className="relative flex flex-1 items-center justify-center">{children}</span>
      <span className={`h-[3px] bg-[#fc9a9f] ${active ? "w-full" : "w-[52px]"}`} />
    </button>
  );
}

function Taskbar() {
  return (
    <div className="flex h-[68px] items-stretch bg-[#0a0a0a] font-['Noto_Sans',sans-serif] text-white">
      <button type="button" aria-label="Start" className="flex w-[82px] items-center justify-center">
        <svg className="size-[24px]" viewBox="0 0 24 24" fill="#fff">
          <path d="M0 3L10 2V11H0ZM11 2L24 0V11H11ZM0 12H10V22L0 21ZM11 12H24V24L11 22Z" />
        </svg>
      </button>
      <div className="flex w-[584px] items-center border-t border-[#b9b9b9] bg-[#f1f1f1] pl-4 pr-[25px]">
        <span className="size-[44px] shrink-0 rounded-full border-[3px] border-[#777] bg-black p-[4px]">
          <span className="block size-full rounded-full bg-[#f1f1f1]" />
        </span>
        <input
          type="text"
          aria-label="Search"
          placeholder="Type here to search"
          className="ml-[15px] min-w-0 flex-1 bg-transparent text-[23px] text-[#333] outline-none placeholder:text-[#333]"
        />
        <button type="button" aria-label="Dictate">
          <svg className="h-7 w-[20px]" viewBox="0 0 20 28" fill="none" stroke="#222" strokeWidth="2">
            <rect x="5.500" y="1" width="9" height="19" rx="2" />
            <path d="M1 13V19Q1 23 5 23H15Q19 23 19 19V13M10 23V27M5 27H15" />
          </svg>
        </button>
      </div>
      <button type="button" aria-label="Task view" className="flex w-[87px] items-center justify-center pr-[4px]">
        <svg className="size-[29px]" viewBox="0 0 29 29" fill="none" stroke="#fff" strokeWidth="1.500">
          <path d="M1 0V5H20V0M1 8H20V20H1ZM1 28V23H20V28M27.500 0V6M27.500 13V28" />
          <path d="M26 8H29V11H26Z" fill="#fff" stroke="none" />
        </svg>
      </button>
      <AppSlot label="Chrome">
        <svg className="size-[38px]" viewBox="0 0 38 38">
          <circle cx="19" cy="19" r="19" fill="#f9cf4a" />
          <path d="M2.500 9.500A19 19 0 0 1 35.500 9.500H19L10.800 23.700Z" fill="#dd4f43" />
          <path d="M2.500 9.500L10.800 23.700Q14 28 19 28.500L25 27L17 38A19 19 0 0 1 2.500 9.500Z" fill="#1da35e" />
          <path d="M19 9.500H35.500Q40 20 33 31.500Q27 38 17.500 38L27.200 23.700Z" fill="#f9cf4a" />
          <circle cx="19" cy="19" r="9" fill="#f1f1f1" />
          <circle cx="19" cy="19" r="7" fill="#4c8bf5" />
        </svg>
      </AppSlot>
      <AppSlot label="Sticky Notes">
        <svg className="size-[31px]" viewBox="0 0 31 31">
          <path d="M0 0H31V31H0Z" fill="#ffe100" />
          <path d="M16 15H31L16 31Z" fill="#111" />
        </svg>
      </AppSlot>
      <AppSlot label="WhatsApp">
        <svg className="size-[37px]" viewBox="0 0 37 37">
          <path d="M19 0A18 18 0 1 1 10 34L0 37L3 27A18 18 0 0 1 19 0Z" fill="#fff" />
          <path d="M19 3A15 15 0 1 1 11 31L4 33L6 26A15 15 0 0 1 19 3Z" fill="#25c03c" />
        </svg>
        <FaPhoneAlt className="absolute size-4" />
        <span className="absolute -right-[7px] bottom-2 flex size-[27px] items-center justify-center rounded-full bg-[#f00a0a] text-[20px] leading-none">
          3
        </span>
      </AppSlot>
      <AppSlot label="Brackets">
        <svg className="size-[38px]" viewBox="0 0 38 38">
          <rect width="38" height="38" rx="5" fill="url(#brackets)" />
          <rect x="4" y="4" width="30" height="27" rx="3" fill="#fff" />
          <path d="M7 7H17V12H13V23H17V28H7ZM31 7H21V12H25V23H21V28H31Z" fill="#454b52" />
        </svg>
      </AppSlot>
      <AppSlot label="File Explorer">
        <svg className="h-[31px] w-[37px]" viewBox="0 0 37 31">
          <path d="M1 0H14L17 3H36V29H1Z" fill="#f2c14a" />
          <path d="M0 6H15L18 4H37V29H0Z" fill="#fbe08a" />
          <path d="M7 31V18Q7 15 10 15H27Q30 15 30 18V31H25V22H12V31Z" fill="#35a8e0" />
        </svg>
      </AppSlot>
      <AppSlot label="GIMP">
        <svg className="h-[40px] w-[42px]" viewBox="0 0 42 40">
          <path d="M14 1Q20 6 28 5Q36 5 41 0V28Q38 35 26 33Q16 33 12 27Q1 25 0 18Q4 13 10 18Q13 18 14 1Z" fill="#a9a9a9" />
          <ellipse cx="18" cy="15" rx="5" ry="5" fill="#111" />
          <ellipse cx="30" cy="15" rx="5" ry="5" fill="#111" />
          <circle cx="18" cy="15" r="2" fill="#ddd" />
          <circle cx="30" cy="15" r="2" fill="#ddd" />
          <path d="M16 27Q22 31 34 25" fill="none" stroke="#222" strokeWidth="1.500" />
          <path d="M26 28L41 39" stroke="#ddd" strokeWidth="3" />
        </svg>
      </AppSlot>
      <AppSlot label="Fusion 360" active>
        <FusionLogo className="size-[41px]" />
      </AppSlot>
      <div className="ml-auto flex items-center">
        <button type="button" aria-label="People" className="flex w-[75px] justify-center pr-2">
          <svg className="size-[26px]" viewBox="0 0 26 26" fill="none" stroke="#fff" strokeWidth="2">
            <circle cx="17" cy="6" r="5" />
            <circle cx="7" cy="14" r="4" />
            <path d="M1 25Q1 18 7 18Q13 18 13 25M13 13Q17 9 21 12Q25 14 25 19" />
          </svg>
        </button>
        <button type="button" aria-label="Hidden icons" className="flex w-14 justify-center">
          <svg className="h-[11px] w-[19px]" viewBox="0 0 19 11" fill="none" stroke="#fff" strokeWidth="1.500">
            <path d="M1 10L9.500 1L18 10" />
          </svg>
        </button>
        <button type="button" aria-label="Dropbox" className="flex w-14 justify-center pr-1">
          <FaDropbox className="size-6" color="#9b9b9b" />
        </button>
        <button type="button" aria-label="Network" className="flex w-[52px] justify-center">
          <svg className="size-[22px]" viewBox="0 0 22 22" fill="none" stroke="#9b9b9b" strokeWidth="1.500">
            <path d="M1 21Q2 3 21 1M6 21Q7 8 21 6M12 21Q13 13 21 12" />
            <circle cx="19" cy="20" r="2" fill="#fff" stroke="none" />
          </svg>
        </button>
        <button type="button" aria-label="Battery" className="flex w-[52px] justify-center">
          <svg className="h-[19px] w-[27px]" viewBox="0 0 27 19" fill="none" stroke="#fff" strokeWidth="1.500">
            <path d="M8 4H24V17H5V11M25 8V13" />
            <path d="M11 7H21V14H8V11H11Z" fill="#fff" />
            <path d="M2 0V4M6 0V4M0 4H8V7Q8 10 4 10Q0 10 0 7Z" />
          </svg>
        </button>
        <button type="button" aria-label="Volume muted" className="flex w-[52px] justify-center">
          <svg className="h-[20px] w-[23px]" viewBox="0 0 23 20" fill="none" stroke="#c9c9c9" strokeWidth="1.500">
            <path d="M1 6H4L9 1V19L4 14H1ZM14 7L21 14M21 7L14 14" />
          </svg>
        </button>
        <button type="button" aria-label="Ink workspace" className="flex w-[62px] justify-center pl-[10px]">
          <svg className="size-8" viewBox="0 0 32 32" fill="none" stroke="#fff" strokeWidth="2">
            <path d="M12 30L12 23L21 3Q24 0 26 4L17 26ZM16 24L25 5M7 19Q1 20 1 25Q2 31 9 31L12 30M26 13Q33 16 30 19L22 21" />
          </svg>
        </button>
        <button type="button" className="w-[78px] pt-[2px] text-[19px]">ENG</button>
        <button type="button" className="w-[98px] whitespace-nowrap pt-[3px] text-[19px] leading-8">
          12:26 PM
          <br />
          2/26/2019
        </button>
        <button type="button" aria-label="Notifications" className="relative flex w-[92px] justify-center pr-[6px]">
          <svg className="h-[28px] w-[27px]" viewBox="0 0 27 28">
            <path d="M0 0H27V22H16L10 28V22H0Z" fill="#fff" />
            <path d="M6 6H21M6 11H21M6 16H21" stroke="#111" strokeWidth="1.500" />
          </svg>
          <span className="absolute left-[40px] top-[11px] flex size-[30px] items-center justify-center rounded-full border border-[#888] bg-[#303030] text-[18px]">
            18
          </span>
        </button>
        <span className="h-[68px] w-2 border-l border-[#777]" />
      </div>
    </div>
  );
}
